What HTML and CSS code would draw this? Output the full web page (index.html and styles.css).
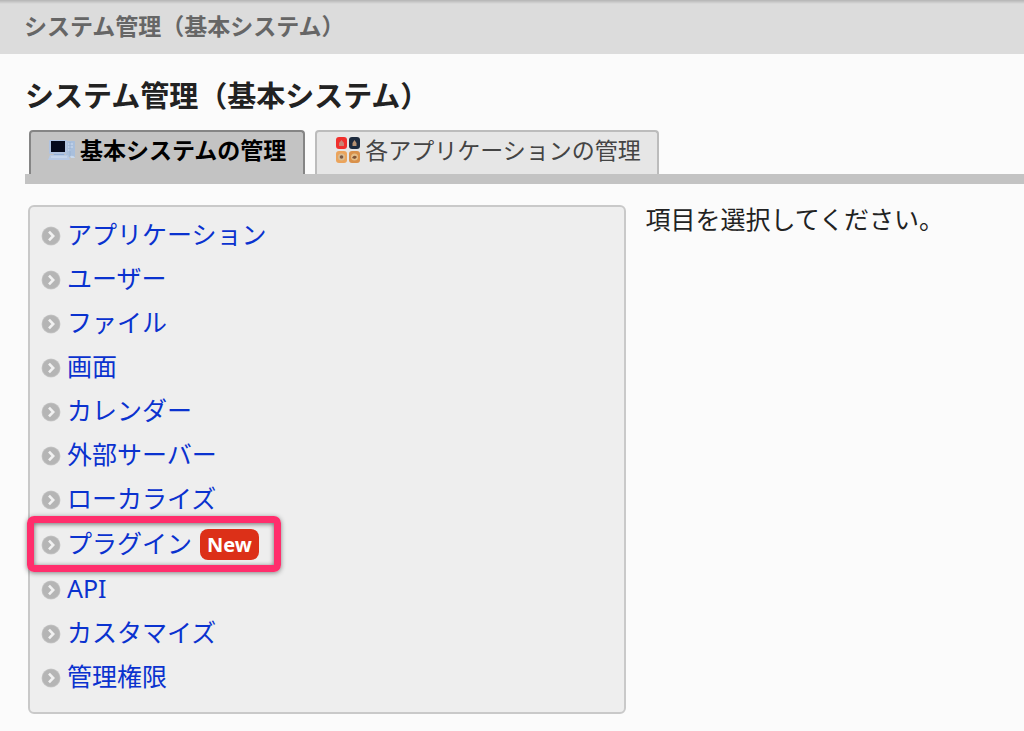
FILE: index.html
```html
<!DOCTYPE html>
<html lang="ja">
<head>
<meta charset="utf-8">
<meta name="viewport" content="width=device-width, initial-scale=1">
<title>システム管理（基本システム）</title>
<link rel="stylesheet" href="styles.css">
</head>
<body>
<svg class="defs" aria-hidden="true">
  <defs>
    <radialGradient id="arrow-fill">
      <stop offset="0.85" stop-color="#b5b5b5"/>
      <stop offset="1" stop-color="#cbcbcb"/>
    </radialGradient>
  </defs>
  <symbol id="arrow" viewBox="0 0 20 20">
    <circle cx="10" cy="10" r="9.5" fill="url(#arrow-fill)"/>
    <path d="M8 5.6 12.2 10 8 14.4" fill="none" stroke="#f1f1f1" stroke-width="2.6"/>
  </symbol>
</svg>
<header class="crumb">システム管理（基本システム）</header>
<main class="page">
  <h1 class="title">システム管理（基本システム）</h1>
  <nav class="tabs">
    <a class="tab tab-active" href="#system">
      <svg class="icon-pc" viewBox="0 0 28 20" aria-hidden="true">
        <rect x="18" y="1" width="9" height="16" rx="1" fill="#a9bfdc"/>
        <path d="M20 4h5M20 7h5M20 10h3" stroke="#c3d4ea" stroke-width="1.4"/>
        <path d="M22 2v15" stroke="#98b2d4" stroke-width="1"/>
        <rect x="1" y="0" width="18" height="14" rx="1" fill="#b0c3e0"/>
        <rect x="3" y="1" width="14" height="11" fill="#04091b"/>
        <path d="M6 14h10l1 2H5z" fill="#91add4"/>
        <path d="M2 15h18l2 5H0z" fill="#b6c9e6"/>
        <path d="M3 17h16" stroke="#d3e1f3" stroke-width="1"/>
        <path d="M22 16q4-1 5 2h-4z" fill="#c8d8ed"/>
      </svg>
      <span>基本システムの管理</span>
    </a>
    <a class="tab" href="#apps">
      <svg class="icon-apps" viewBox="0 0 26 28" aria-hidden="true">
        <rect x="1" y="1" width="11" height="12" rx="3" fill="#f0302d"/>
        <path d="M6.500 4 9 7v3H4V7z" fill="#c98475"/>
        <rect x="14" y="1" width="11" height="12" rx="3" fill="#1e2b3e"/>
        <path d="M19.500 4 21.500 7v3h-4V7z" fill="#b79272"/>
        <rect x="1" y="15" width="11" height="12" rx="3" fill="#eba45c"/>
        <circle cx="6.500" cy="21" r="3.500" fill="#d9bc92"/>
        <circle cx="6.500" cy="21" r="1.800" fill="#775746"/>
        <rect x="14" y="15" width="11" height="12" rx="3" fill="#d9914b"/>
        <circle cx="19.500" cy="21" r="3.500" fill="#e5bd86"/>
        <path d="M17 22q2-4 5-1l-2 2z" fill="#7e5335"/>
      </svg>
      <span>各アプリケーションの管理</span>
    </a>
  </nav>
  <div class="columns">
    <ul class="menu">
      <li class="item"><svg class="arrow" aria-hidden="true"><use href="#arrow"/></svg><a href="#application">アプリケーション</a></li>
      <li class="item"><svg class="arrow" aria-hidden="true"><use href="#arrow"/></svg><a href="#user">ユーザー</a></li>
      <li class="item"><svg class="arrow" aria-hidden="true"><use href="#arrow"/></svg><a href="#file">ファイル</a></li>
      <li class="item"><svg class="arrow" aria-hidden="true"><use href="#arrow"/></svg><a href="#screen">画面</a></li>
      <li class="item"><svg class="arrow" aria-hidden="true"><use href="#arrow"/></svg><a href="#calendar">カレンダー</a></li>
      <li class="item"><svg class="arrow" aria-hidden="true"><use href="#arrow"/></svg><a href="#server">外部サーバー</a></li>
      <li class="item"><svg class="arrow" aria-hidden="true"><use href="#arrow"/></svg><a href="#localize">ローカライズ</a></li>
      <li class="item item-marked"><svg class="arrow" aria-hidden="true"><use href="#arrow"/></svg><a href="#plugin">プラグイン</a><span class="badge">New</span><span class="marker"></span></li>
      <li class="item"><svg class="arrow" aria-hidden="true"><use href="#arrow"/></svg><a href="#api">API</a></li>
      <li class="item"><svg class="arrow" aria-hidden="true"><use href="#arrow"/></svg><a href="#customize">カスタマイズ</a></li>
      <li class="item"><svg class="arrow" aria-hidden="true"><use href="#arrow"/></svg><a href="#permission">管理権限</a></li>
    </ul>
    <p class="message">項目を選択してください。</p>
  </div>
</main>
</body>
</html>
```

FILE: styles.css
```css
* {
  box-sizing: border-box;
}

body {
  margin: 0;
  background: #fbfbfb;
  color: #222;
  font-family: "Noto Sans", "Noto Sans CJK JP", sans-serif;
  font-size: 25px;
  line-height: 36px;
}

a {
  color: #0a32cf;
  text-decoration: none;
}

.defs {
  position: absolute;
  width: 0;
  height: 0;
}

.crumb {
  padding: 8px 24px 10px;
  background: linear-gradient(#b4b4b4, #dcdcdc 4px);
  color: #666;
  font-size: 23px;
  font-weight: bold;
}

.page {
  padding: 24px 0 18px 25px;
}

.title {
  margin: 0;
  font-size: 29px;
  line-height: 36px;
}

.tabs {
  display: flex;
  gap: 10px;
  margin-top: 16px;
  padding-left: 4px;
  border-bottom: 10px solid #c3c3c3;
}

.tab {
  display: flex;
  align-items: flex-start;
  gap: 4px;
  height: 44px;
  padding: 0 16px 0 18px;
  border: 2px solid #bcbcbc;
  border-bottom: 0;
  border-radius: 4px 4px 0 0;
  background: #e6e6e6;
  color: #444;
  font-size: 23px;
}

.tab-active {
  padding: 0 17px;
  border-color: #858585;
  background: #c3c3c3;
  color: #000;
  font-weight: bold;
}

.icon-pc {
  width: 28px;
  height: 20px;
  margin-top: 8px;
}

.icon-apps {
  width: 26px;
  height: 28px;
  margin-top: 4px;
}

.columns {
  display: flex;
  align-items: flex-start;
  gap: 20px;
  margin-top: 21px;
  padding-left: 3px;
}

.menu {
  flex: 0 0 60%;
  margin: 0;
  padding: 5px 11px 14px;
  border: 2px solid #c9c9c9;
  border-radius: 6px;
  background: #eee;
  list-style: none;
}

.item {
  display: flex;
  align-items: center;
  gap: 6px;
  height: 44px;
}

.item-marked {
  position: relative;
  height: 46px;
}

.arrow {
  width: 20px;
  height: 20px;
  margin-top: 4px;
}

.badge {
  margin: 2px 0 0 2px;
  padding: 0 7px;
  border-radius: 8px;
  background: #dc3018;
  color: #fff;
  font-size: 20px;
  font-weight: bold;
  line-height: 31px;
}

.marker {
  position: absolute;
  top: -4px;
  left: -14px;
  width: 254px;
  height: 56px;
  border: 7px solid #ff2e6c;
  border-radius: 7px;
  box-shadow: 0 1px 5px rgba(0, 0, 0, 0.45), inset 0 1px 5px rgba(0, 0, 0, 0.55);
  pointer-events: none;
}

.message {
  margin: 0;
  line-height: 28px;
}
```
